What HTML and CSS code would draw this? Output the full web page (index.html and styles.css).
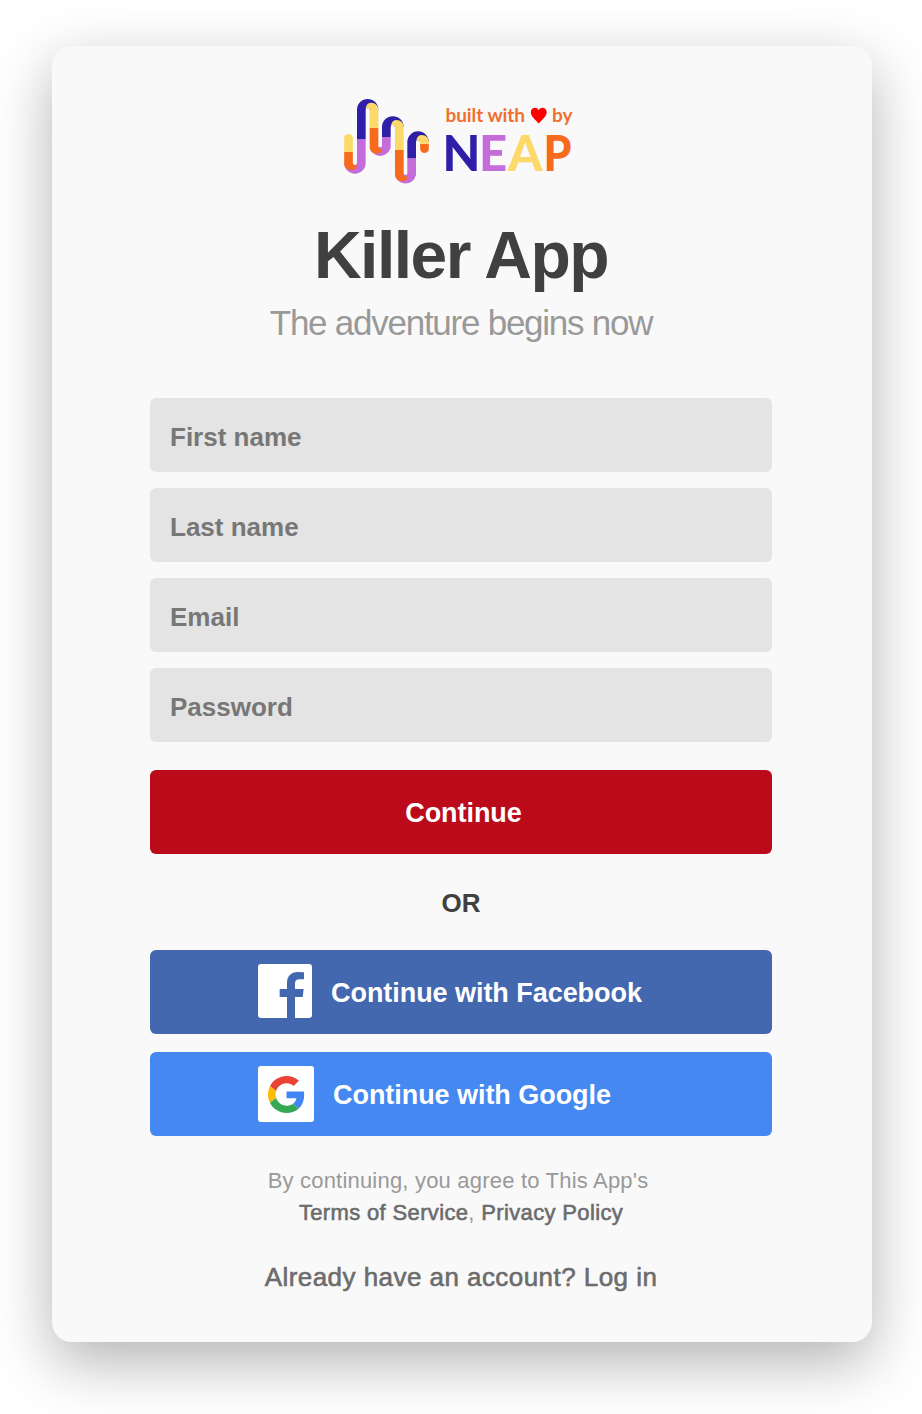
FILE: index.html
```html
<!DOCTYPE html>
<html lang="en">
<head>
<meta charset="utf-8">
<title>Killer App</title>
<link rel="stylesheet" href="styles.css">
</head>
<body>
<main class="card">
  <svg class="logo" viewBox="0 0 240 96" role="img" aria-label="built with love by NEAP">
    <g transform="translate(-6 -5) scale(.33333)" fill="none" stroke-width="26">
      <path stroke="#c56cdb" d="M40.5 219a19 19 0 0 0 38.5 0V148M117 170a19 19 0 0 0 37 0V141M193 253a19 19 0 0 0 37 0V205"/>
      <path stroke="#2f1fa8" d="M79 148V59a19 19 0 0 1 38 0M154 141V111a19 19 0 0 1 39 0M230 205V156a19 19 0 0 1 38.500 0"/>
      <g stroke="none" fill="#f76b1c">
        <path d="M27.500 186H53.500V219Q54 226 60 226Q66 226 66 221C66 234 58 240 50 240C37 240 27.500 231 27.500 219Z"/>
        <path d="M104 114H130V170Q130 177 136 177Q142 177 142 172C142 185 135 191 126 191C113 191 104 182 104 170Z"/>
        <path d="M180 180H206V253Q206 260 212 260Q218 260 218 255C218 268 211 274 202 274C189 274 180 265 180 253Z"/>
        <path d="M255.500 161H281.500V176a13 13 0 0 1-26 0Z"/>
      </g>
      <g stroke="none" fill="#fcd968">
        <path d="M27.500 186V145a13 13 0 0 1 26 0V186Z"/>
        <path d="M130 114H104V59Q104 53 98 53Q92 53 92 57C93 44 100 38 108 38C121 38 130 47 130 59Z"/>
        <path d="M206 180H180V111Q180 105 174 105Q168 105 168 109C169 96 176 90 184 90C197 90 206 99 206 111Z"/>
        <path d="M281.500 161H255.500V156Q255 150 250 150Q244 150 244 154C245 141 252 135 260 135C273 135 281.500 144 281.500 156Z"/>
      </g>
    </g>
    <g class="tagline">
      <text x="104.500" y="27" textLength="79.500">built with</text>
      <text x="211" y="27" textLength="20.500">by</text>
    </g>
    <path fill="#f00" d="M197.700 28.500C194 24.500 189.800 21.200 189.800 17.300C189.800 12.300 195.600 11.200 197.700 15.200C199.800 11.200 205.700 12.300 205.700 17.300C205.700 21.200 201.500 24.500 197.700 28.500Z"/>
    <g class="wordmark">
      <text x="101.500" y="76" fill="#2f1fa8">N</text>
      <text x="138" y="76" fill="#c56cdb">E</text>
      <text x="167" y="76" fill="#fcd968">A</text>
      <text x="202.500" y="76" fill="#f76b1c" textLength="28" lengthAdjust="spacingAndGlyphs">P</text>
    </g>
  </svg>
  <h1 class="title">Killer App</h1>
  <p class="subtitle">The adventure begins now</p>
  <form class="form">
    <input class="field" type="text" placeholder="First name" aria-label="First name">
    <input class="field" type="text" placeholder="Last name" aria-label="Last name">
    <input class="field" type="email" placeholder="Email" aria-label="Email">
    <input class="field" type="password" placeholder="Password" aria-label="Password">
    <button class="button submit" type="button">Continue</button>
  </form>
  <p class="divider">OR</p>
  <div class="providers">
    <button class="button provider facebook" type="button">
      <svg class="facebook-icon" viewBox="0 0 162 162"><path fill="#fff" fill-rule="evenodd" d="M9 0H153Q162 0 162 9V153Q162 162 153 162H111V99H134L137 75H111V59C111 50 115 46 125 46H138V25Q129 24 119 24C99 24 87 36 87 57V75H65V99H87V162H9Q0 162 0 153V9Q0 0 9 0Z"/></svg>
      <span>Continue with Facebook</span>
    </button>
    <button class="button provider google" type="button">
      <span class="google-tile"><svg class="google-icon" viewBox="0 0 48 48">
        <path fill="#ea4335" d="M24 9.500c3.540 0 6.710 1.220 9.210 3.600l6.850-6.850C35.900 2.380 30.470 0 24 0 14.620 0 6.510 5.380 2.560 13.220l7.980 6.190C12.430 13.720 17.740 9.500 24 9.500z"/>
        <path fill="#4285f4" d="M46.980 24.550c0-1.570-.15-3.090-.38-4.550H24v9.020h12.940c-.58 2.960-2.260 5.480-4.780 7.180l7.730 6c4.510-4.180 7.090-10.360 7.090-17.650z"/>
        <path fill="#fbbc05" d="M10.530 28.590c-.48-1.450-.76-2.990-.76-4.590s.27-3.140.76-4.590l-7.980-6.190C.92 16.460 0 20.120 0 24c0 3.880.92 7.540 2.560 10.780l7.970-6.190z"/>
        <path fill="#34a853" d="M24 48c6.480 0 11.930-2.130 15.890-5.810l-7.730-6c-2.150 1.450-4.920 2.300-8.160 2.300-6.260 0-11.570-4.220-13.470-9.910l-7.980 6.190C6.510 42.620 14.620 48 24 48z"/>
      </svg></span>
      <span>Continue with Google</span>
    </button>
  </div>
  <p class="legal">By continuing, you agree to This App's<br><span class="legal-links"><a>Terms of Service</a>, <a>Privacy Policy</a></span></p>
  <p class="login">Already have an account? <a>Log in</a></p>
</main>
</body>
</html>
```
FILE: styles.css
```css
* { box-sizing: border-box; }

body {
  margin: 0;
  padding: 46px 50px 72px 52px;
  background: #fff;
  font-family: "Liberation Sans", Arial, sans-serif;
}

.card {
  display: flex;
  flex-direction: column;
  align-items: center;
  width: 820px;
  height: 1296px;
  padding: 49px 100px 0 98px;
  background: #f9f9f9;
  border-radius: 20px;
  box-shadow: 0 20px 60px rgba(0, 0, 0, .3);
}

h1, p { margin: 0; }

.logo {
  display: block;
  flex: none;
  width: 240px;
  height: 96px;
}

.tagline {
  fill: #f07030;
  font: 700 19px Lato, sans-serif;
}

.wordmark { font: 900 49px Lato, sans-serif; }

.title {
  margin-top: 26px;
  color: #404040;
  font-size: 66px;
  line-height: 76px;
  letter-spacing: -1.500px;
  white-space: nowrap;
}

.subtitle {
  margin-top: 9px;
  color: #999;
  font-size: 35px;
  line-height: 42px;
  letter-spacing: -1.250px;
}

.form {
  display: flex;
  flex-direction: column;
  gap: 16px;
  width: 100%;
  margin-top: 54px;
}

.field {
  height: 74px;
  padding: 4px 20px 0;
  border: 0;
  border-radius: 6px;
  background: #e4e4e4;
  font: 700 26px "Liberation Sans", Arial, sans-serif;
}

.field::placeholder {
  color: #777;
  opacity: 1;
}

.button {
  height: 84px;
  padding: 2px 0 0;
  border: 0;
  border-radius: 6px;
  color: #fff;
  font: 700 27px "Liberation Sans", Arial, sans-serif;
  letter-spacing: -.050px;
}

.submit {
  margin-top: 12px;
  padding-left: 5px;
  background: #bb0a1a;
}

.divider {
  margin-top: 34px;
  color: #404040;
  font-size: 26px;
  font-weight: 700;
  line-height: 30px;
}

.providers {
  display: flex;
  flex-direction: column;
  gap: 18px;
  width: 100%;
  margin-top: 32px;
}

.provider {
  display: flex;
  align-items: center;
  gap: 19px;
  padding: 0 0 0 108px;
}

.provider > span:last-child { padding-top: 2px; }

.facebook { background: #4468b0; }

.google { background: #4588f1; }

.facebook-icon {
  width: 54px;
  height: 54px;
  margin-bottom: 2px;
}

.google-tile {
  display: grid;
  place-items: center;
  width: 56px;
  height: 56px;
  border-radius: 3px;
  background: #fff;
}

.google-icon {
  width: 37px;
  height: 37px;
}

.legal {
  margin: 29px 6px 0 0;
  color: #999;
  font-size: 22px;
  line-height: 32px;
  letter-spacing: .200px;
  text-align: center;
}

.legal-links {
  padding-left: 6px;
  letter-spacing: .350px;
}

.legal a {
  color: #6c6c6c;
  -webkit-text-stroke: .600px #6c6c6c;
}

.login {
  margin-top: 33px;
  color: #6c6c6c;
  font-size: 26px;
  line-height: 30px;
  letter-spacing: .450px;
  -webkit-text-stroke: .600px #6c6c6c;
}
```
